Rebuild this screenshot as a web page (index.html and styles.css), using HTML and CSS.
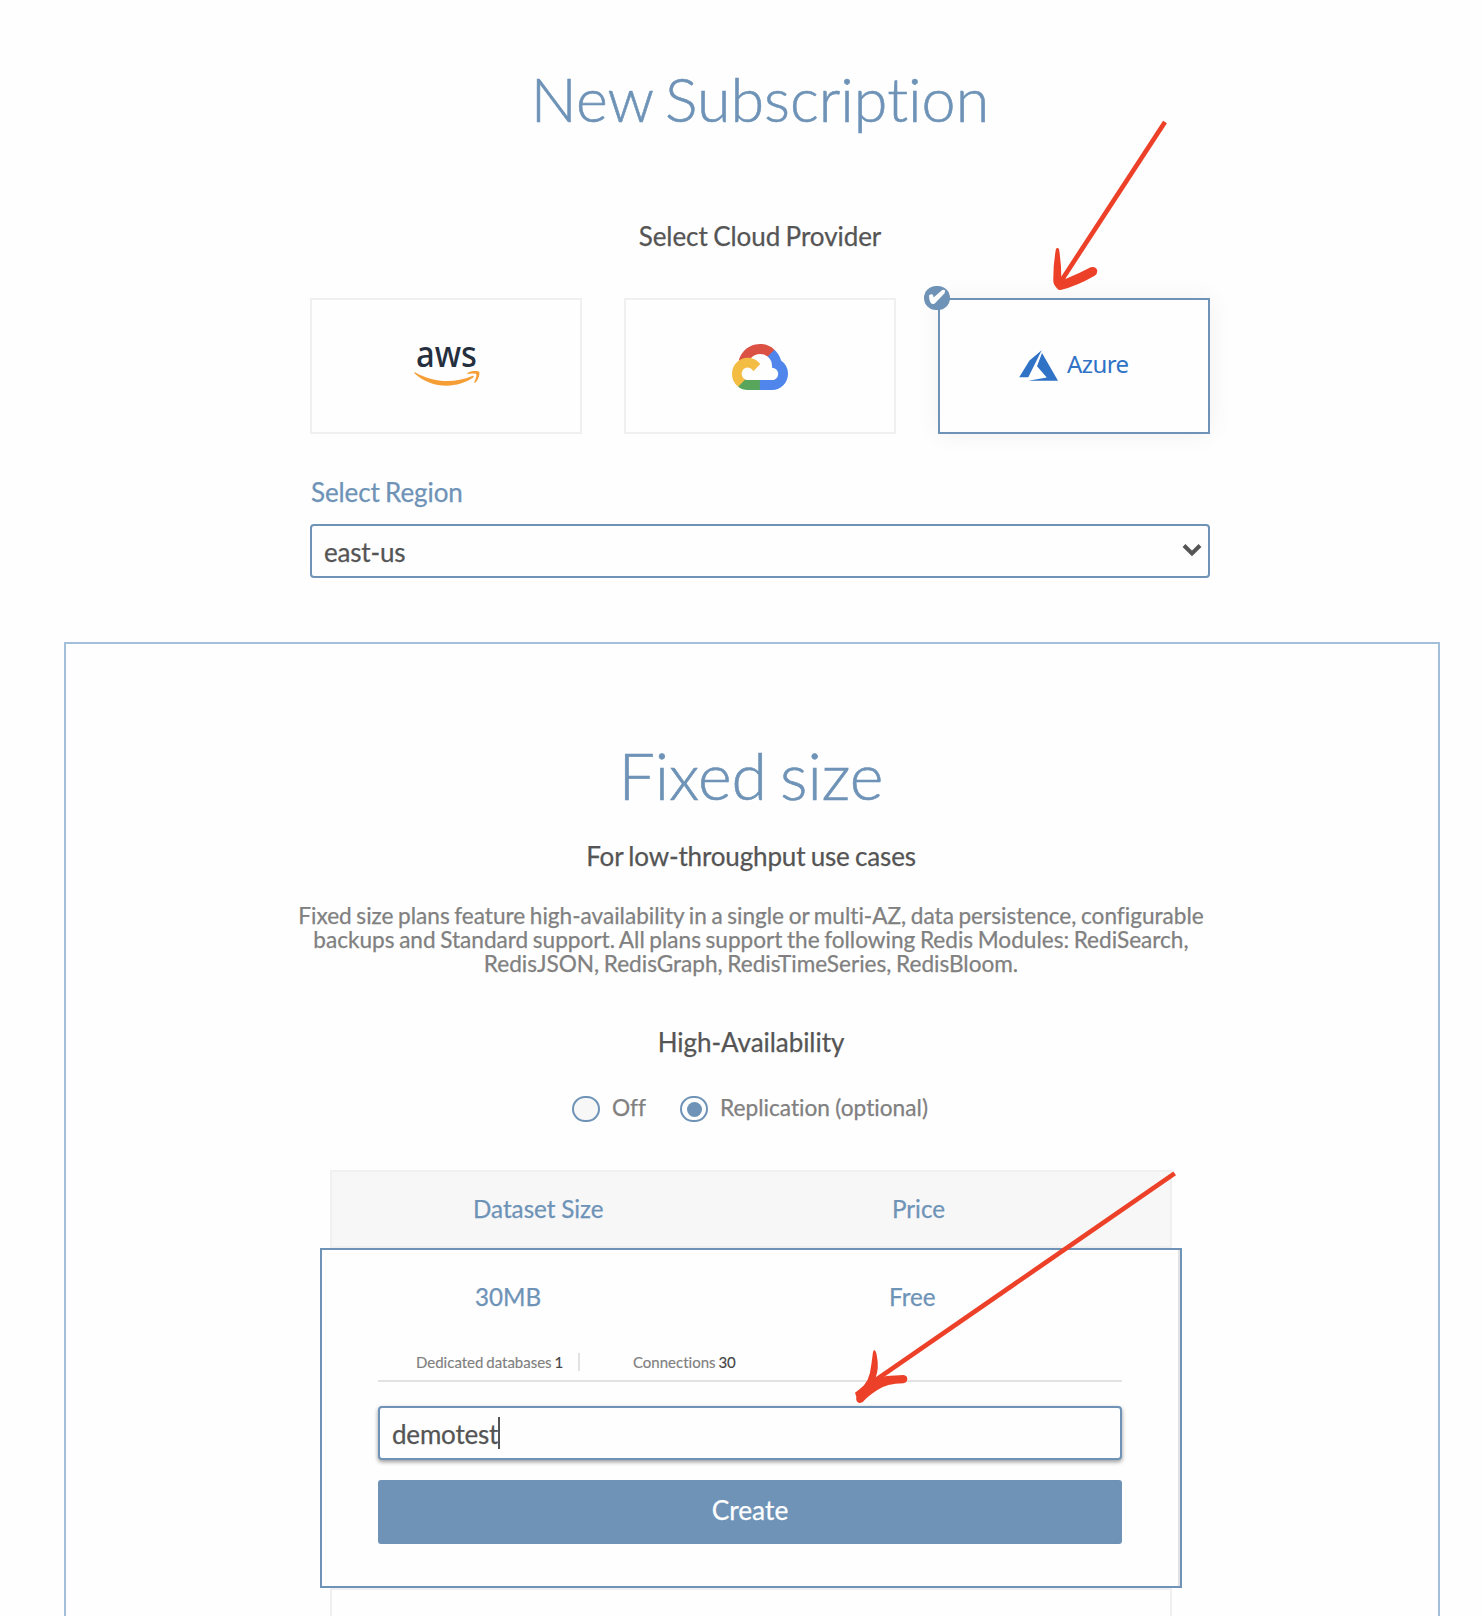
FILE: index.html
```html
<!DOCTYPE html>
<html lang="en">
<head>
<meta charset="utf-8">
<title>New Subscription</title>
<link rel="stylesheet" href="styles.css">
</head>
<body>
<main class="page">
  <section class="setup">
    <h1 class="title">New Subscription</h1>
    <h2 class="heading setup-heading">Select Cloud Provider</h2>
    <div class="providers">
      <div class="provider">
        <svg class="aws" width="86" height="76" viewBox="-10 -20 86 76">
          <text class="aws-text" x="2" y="26.5" textLength="61" lengthAdjust="spacingAndGlyphs">aws</text>
          <g fill="#f59e36" transform="translate(0 6.5) scale(.2165)">
            <path d="M273.5 143.7c-32.9 24.3-80.7 37.2-121.8 37.2-57.6 0-109.5-21.3-148.7-56.7-3.1-2.8-.3-6.6 3.4-4.4 42.4 24.6 94.7 39.5 148.8 39.5 36.5 0 76.6-7.6 113.5-23.2 5.5-2.5 10.2 3.6 4.8 7.6z"/>
            <path d="M287.2 128.1c-4.2-5.4-27.8-2.6-38.5-1.3-3.2.4-3.7-2.4-.8-4.5 18.8-13.2 49.7-9.4 53.3-5 3.6 4.5-1 35.4-18.6 50.2-2.7 2.3-5.3 1.1-4.1-1.9 4-9.9 12.9-32.2 8.7-37.5z"/>
          </g>
        </svg>
      </div>
      <div class="provider">
        <svg class="gcp" width="56" height="46" viewBox="0 0 256 206" preserveAspectRatio="none">
          <path fill="#db5144" d="M170.25 56.82L192.5 34.57l1.49-9.37C153.44-11.68 88.98-7.5 52.42 33.92 42.27 45.42 34.73 59.76 30.72 74.57l7.97-1.12 44.5-7.34 3.44-3.51c19.8-21.75 53.27-24.67 76.13-6.17z"/>
          <path fill="#5086ec" d="M224.2 73.92a100.2 100.2 0 0 0-30.21-48.72l-31.23 31.23a55.5 55.5 0 0 1 20.37 44.04v5.54a27.8 27.8 0 0 1 27.8 27.8c0 15.35-12.45 27.48-27.8 27.48h-55.67l-5.46 5.93v33.34l5.46 5.24h55.67c39.93.31 72.56-31.5 72.87-71.43a72.3 72.3 0 0 0-31.8-60.45"/>
          <path fill="#58a55c" d="M71.87 205.8h55.59v-44.51H71.87a27.5 27.5 0 0 1-11.48-2.5l-7.97 2.42-22.25 22.25-1.94 7.57c12.56 9.49 27.89 14.83 43.64 14.77"/>
          <path fill="#f2bd42" d="M71.87 61.43C31.94 61.66-.24 94.23 0 134.16a72.3 72.3 0 0 0 28.23 56.87l32.25-32.25c-13.99-6.32-20.22-22.77-13.9-36.76s22.78-20.22 36.77-13.9c6.16 2.79 11.11 7.73 13.89 13.9l32.25-32.25c-13.72-17.93-35.04-28.43-57.62-28.34"/>
        </svg>
      </div>
      <div class="provider provider-selected">
        <svg class="azure" width="39" height="32" viewBox="0 0 39 32">
          <path fill="#3072c6" d="M.2 27.3L10.5 10.4 22.7.2 9.3 27.3zM23 3l16 27.7H9.3l18.5-3.2L18 16.2z"/>
        </svg>
        <span class="azure-text">Azure</span>
        <svg class="badge" width="26" height="24" viewBox="0 0 26 24">
          <rect width="26" height="24" rx="12" fill="#6e93b7"/>
          <path d="M5 9.6Q6.8 7.4 9 8.8L9.6 11.6 17.6 4.4Q20 3 21.2 4.6L20.6 7.2 11 17.2Q8.6 19 6.8 17Q5 14 5 9.6z" fill="#fefefe"/>
        </svg>
      </div>
    </div>
    <div class="label">Select Region</div>
    <div class="field select">
      <span>east-us</span>
      <svg width="20" height="14" viewBox="0 0 20 14"><path d="M2 2.5l8 8 8-8" fill="none" stroke="#555" stroke-width="4"/></svg>
    </div>
  </section>

  <section class="panel">
    <h1 class="title panel-title">Fixed size</h1>
    <h2 class="heading panel-sub">For low-throughput use cases</h2>
    <p class="desc">Fixed size plans feature high-availability in a single or multi-AZ, data persistence, configurable<br>backups and Standard support. All plans support the following Redis Modules: RediSearch,<br>RedisJSON, RedisGraph, RedisTimeSeries, RedisBloom.</p>
    <h2 class="heading ha">High-Availability</h2>
    <div class="radios">
      <div class="option"><span class="radio"></span><span class="option-text">Off</span></div>
      <div class="option"><span class="radio radio-on"></span><span class="option-text">Replication (optional)</span></div>
    </div>
    <div class="table">
      <div class="thead"><span>Dataset Size</span><span>Price</span></div>
      <div class="plan">
        <div class="plan-top"><span>30MB</span><span>Free</span></div>
        <div class="stats">
          <span class="stat stat-db">Dedicated databases <b>1</b></span>
          <span class="stat">Connections <b>30</b></span>
        </div>
        <div class="field name"><span>demotest</span><i class="caret"></i></div>
        <div class="create">Create</div>
      </div>
      <div class="next-row"></div>
    </div>
  </section>

  <svg class="arrows" width="1482" height="1616" viewBox="0 0 1482 1616">
    <g transform="translate(1020 100) scale(.33333)">
      <path class="shaft" d="M435 66L122 545"/>
      <path class="head" d="M108 446Q113 442 117 447Q124 490 124 533L138 536Q175 522 212 502Q228 498 232 512Q232 522 224 527Q170 558 122 570L115 569Q100 556 100 544Q99 495 108 446Z"/>
    </g>
    <g transform="translate(820 1150) scale(.33333)">
      <path class="shaft" d="M1064 70L160 695"/>
      <path class="head" d="M162 600Q168 600 171 620Q178 655 166 686L200 678L250 675Q262 677 262 687Q261 698 250 700Q200 701 172 720Q145 738 134 750Q128 760 118 759Q106 755 109 740L105 728Q120 718 132 706Q145 690 150 668Q155 640 159 606Z"/>
    </g>
  </svg>
</main>
</body>
</html>
```
FILE: styles.css
```css
* { box-sizing: border-box; }
body { margin: 0; background: #fefefe; font-family: Lato, "Liberation Sans", sans-serif; color: #555; font-variant-ligatures: none; -webkit-text-stroke: .25px currentColor; }
.page { position: relative; height: 1616px; overflow: hidden; }
.setup { width: 900px; margin-left: 310px; padding-top: 62px; }
.title { margin: 0; font-size: 61px; line-height: 73px; font-weight: 300; color: #6e93b7; text-align: center; word-spacing: -4.5px; -webkit-text-stroke-width: .6px; }
.heading { margin: 0; font-size: 26px; line-height: 31px; font-weight: 400; text-align: center; white-space: nowrap; letter-spacing: -.05px; word-spacing: -1.2px; }
.setup-heading { margin-top: 86px; }
.providers { display: flex; gap: 42px; margin-top: 46px; }
.provider { position: relative; display: flex; flex: none; width: 272px; height: 136px; border: 2px solid #f0f0f0; }
.provider-selected { border-color: #6e93b7; box-shadow: 0 0 24px rgba(0, 0, 0, .06); }
.aws { margin: 20px 0 0 91.7px; }
.aws-text { font: 500 36px "Noto Sans", sans-serif; fill: #252f3e; -webkit-text-stroke: 0; }
.gcp { margin: 44px 0 0 106px; }
.azure { margin: 50px 0 0 79px; }
.azure-text { margin: 48px 0 0 9px; font: 24px/32px "Noto Sans", sans-serif; color: #3072c6; letter-spacing: -.6px; -webkit-text-stroke: 0; }
.badge { position: absolute; left: -16px; top: -14px; }
.label { margin: 43px 0 0 1px; font-size: 26px; line-height: 31px; color: #6e93b7; letter-spacing: -.1px; word-spacing: -1.2px; }
.field { display: flex; align-items: center; height: 54px; border: 2px solid #6e93b7; border-radius: 4px; padding: 3px 12px 0; font-size: 26px; line-height: 31px; letter-spacing: -.2px; }
.select { justify-content: space-between; margin-top: 16px; padding-right: 6px; }
.select svg { margin-top: -5px; }
.panel { width: 1376px; height: 1000px; margin: 64px 0 0 64px; border: 2px solid #a3bfdb; padding-top: 93px; }
.panel-title { font-size: 64.5px; line-height: 77px; margin-left: -2px; }
.panel-sub { margin: 27px 0 0 -2px; letter-spacing: -.15px; }
.desc { margin: 32px 0 0 -2px; font-size: 22.6px; line-height: 24px; text-align: center; color: #808080; white-space: nowrap; word-spacing: -1.2px; }
.ha { margin: 51px 0 0 -2px; }
.radios { display: flex; gap: 54px; margin: 38px 0 0 506px; height: 26px; }
.option { display: flex; align-items: center; gap: 13px; width: 54px; font-size: 22.7px; line-height: 26px; color: #808080; white-space: nowrap; word-spacing: -.5px; }
.option-text { margin: -2px 0 0 -1px; }
.radio { flex: none; display: grid; place-items: center; width: 28px; height: 26px; border: 2px solid #6e93b7; border-radius: 13px; background: #f7f7f7; }
.radio-on { background: #fefefe; }
.radio-on::after { content: ""; width: 15px; height: 15px; border-radius: 50%; background: #6e93b7; }
.table { width: 862px; margin: 48px 0 0 254px; color: #6e93b7; font-size: 24.2px; line-height: 29px; }
.thead { display: grid; grid-template-columns: 419px 1fr; margin: 0 10px; height: 78px; padding: 22px 0 0 141px; border: 2px solid #f0f0f0; background: #f7f7f7; word-spacing: -.5px; }
.plan { height: 340px; padding: 32px 54px 0 56px; border: 2px solid #6e93b7; background: #fefefe; box-shadow: inset -2px 0 #e2e2e2; }
.plan-top { display: grid; grid-template-columns: 414px 1fr; padding-left: 97px; }
.stats { display: flex; gap: 53px; height: 71px; padding: 42px 0 0 38px; border-bottom: 2px solid #e2e2e2; font-size: 15px; line-height: 18px; color: #808080; white-space: nowrap; word-spacing: -1px; -webkit-text-stroke-width: .15px; }
.plan .stats, .plan .name, .plan .create { width: 744px; }
.stat b { font-weight: 400; color: #444; }
.stat-db { width: 164px; height: 18px; border-right: 2px solid #e2e2e2; }
.name { margin-top: 24px; color: #555; box-shadow: 0 2px 4px rgba(0, 0, 0, .4); background: #fefefe; }
.caret { width: 2px; height: 32px; margin-top: -3px; background: #555; }
.create { height: 64px; margin-top: 20px; border-radius: 3px; background: #6e93b7; color: #fff; font-size: 26.3px; line-height: 61px; text-align: center; }
.next-row { height: 60px; margin: 0 10px; border: 2px solid #f0f0f0; }
.arrows { position: absolute; left: 0; top: 0; pointer-events: none; }
.shaft { fill: none; stroke: #ec4028; stroke-width: 14; }
.head { fill: #ec4028; }
```
